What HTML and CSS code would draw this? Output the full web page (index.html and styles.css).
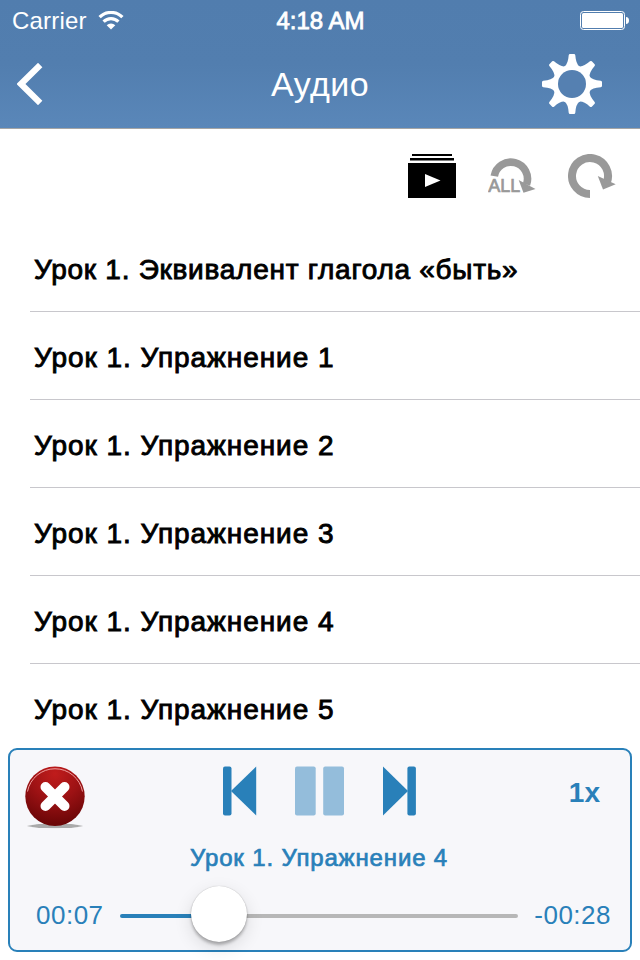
FILE: index.html
```html
<!DOCTYPE html>
<html lang="ru">
<head>
    <meta charset="UTF-8">
    <meta name="viewport" content="width=device-width, initial-scale=1.0">
    <title>Аудио</title>
    <link rel="stylesheet" href="styles.css">
</head>
<body>
    <div class="app">
        <header class="header">
            <div class="status-bar">
                <div class="carrier">
                    <span class="carrier-name">Carrier</span>
                    <svg class="wifi" width="26" height="20" viewBox="0 0 26 20">
                        <g fill="none" stroke="#fff" stroke-width="3.200">
                            <path d="M1.6 6.2a16 16 0 0 1 22.8 0"/>
                            <path d="M5.6 10.6a10.5 10.5 0 0 1 14.8 0"/>
                        </g>
                        <path fill="#fff" d="M13 18.500l-4.300-4.300a6.200 6.200 0 0 1 8.600 0z"/>
                    </svg>
                </div>
                <span class="clock">4:18 AM</span>
                <svg class="battery" width="49" height="19" viewBox="0 0 49 19">
                    <rect x=".5" y=".5" width="44" height="18" rx="3" fill="none" stroke="#fff"/>
                    <rect x="2" y="2" width="41" height="15" rx="1.5" fill="#fff"/>
                    <path d="M46 6c2 0 3 1.500 3 3.500s-1 3.500-3 3.500z" fill="#fff"/>
                </svg>
            </div>
            <nav class="nav-bar">
                <svg class="back" width="26" height="42" viewBox="0 0 26 42">
                    <path d="M23.200 2L4 21l19.200 19" fill="none" stroke="#fff" stroke-width="6.200"/>
                </svg>
                <h1 class="nav-title">Аудио</h1>
                <svg class="gear" width="60" height="60" viewBox="-30 -30 60 60">
                    <defs>
                        <path id="tooth" d="M-7.500-17.500Q-3.900-20-3.300-28.700Q-3.100-30-2-30H2Q3.100-30 3.300-28.700Q3.900-20 7.500-17.500L5-12H-5z"/>
                    </defs>
                    <g fill="#fff">
                        <use href="#tooth"/>
                        <use href="#tooth" transform="rotate(45)"/>
                        <use href="#tooth" transform="rotate(90)"/>
                        <use href="#tooth" transform="rotate(135)"/>
                        <use href="#tooth" transform="rotate(180)"/>
                        <use href="#tooth" transform="rotate(225)"/>
                        <use href="#tooth" transform="rotate(270)"/>
                        <use href="#tooth" transform="rotate(315)"/>
                    </g>
                    <circle r="16.500" fill="none" stroke="#fff" stroke-width="5"/>
                    <circle r="14" fill="#5580b1"/>
                </svg>
            </nav>
        </header>

        <div class="toolbar">
            <svg width="48" height="44" viewBox="0 0 48 44">
                <path d="M4 0h40v2H4zM2 4h44v2.500H2zM0 9h48v35H0z"/>
                <path d="M17 20l15.500 6.500L17 33z" fill="#fff"/>
            </svg>
            <svg width="48" height="44" viewBox="0 0 48 44">
                <path d="M6.300 22.200A16.700 16.700 0 1 1 38.500 30.500" fill="none" stroke="#999" stroke-width="7.600"/>
                <path d="M30.700 26l16.800 9L35.500 38.700z" fill="#999"/>
                <text class="all-label" x=".3" y="38.300">ALL</text>
            </svg>
            <svg width="48" height="44" viewBox="0 0 48 44">
                <path d="M22 40A18 18 0 1 1 38.800 28.500" fill="none" stroke="#999" stroke-width="8"/>
                <path d="M29.800 22l17.900 8.300L35 35.500z" fill="#999"/>
            </svg>
        </div>

        <ul class="track-list">
            <li class="track track-first">Урок 1. Эквивалент глагола «быть»</li>
            <li class="track">Урок 1. Упражнение 1</li>
            <li class="track">Урок 1. Упражнение 2</li>
            <li class="track">Урок 1. Упражнение 3</li>
            <li class="track">Урок 1. Упражнение 4</li>
            <li class="track">Урок 1. Упражнение 5</li>
        </ul>

        <section class="player">
            <div class="player-top">
                <svg class="close" width="62" height="64" viewBox="0 0 62 64">
                    <defs>
                        <radialGradient id="red" cx=".5" cy=".12" r=".85">
                            <stop offset="0" stop-color="#c01c1c"/>
                            <stop offset=".5" stop-color="#9d1214"/>
                            <stop offset="1" stop-color="#6b0607"/>
                        </radialGradient>
                        <radialGradient id="shade">
                            <stop offset=".8" stop-color="#aaa"/>
                            <stop offset="1" stop-color="#aaa" stop-opacity="0"/>
                        </radialGradient>
                    </defs>
                    <ellipse cx="31" cy="60" rx="29" ry="2.600" fill="url(#shade)"/>
                    <circle cx="31" cy="30.300" r="29.700" fill="url(#red)"/>
                    <path d="M3.500 25.500a28 28 0 0 1 55 0" fill="none" stroke="#f0a0a0" stroke-width="1"/>
                    <path d="M21.500 21l19 19M40.500 21l-19 19" stroke="#fff" stroke-width="10" stroke-linecap="round"/>
                </svg>
                <div class="controls">
                    <svg width="34" height="50" viewBox="0 0 34 50">
                        <rect x="0" y=".5" width="8.500" height="49" rx="2" fill="#2980b9"/>
                        <path d="M33.200 .5v49L8 25z" fill="#2980b9"/>
                    </svg>
                    <svg width="50" height="50" viewBox="0 0 50 50">
                        <rect x="0" y=".5" width="20.700" height="49" rx="2" fill="#94bddb"/>
                        <rect x="28.200" y=".5" width="20.800" height="49" rx="2" fill="#94bddb"/>
                    </svg>
                    <svg width="34" height="50" viewBox="0 0 34 50">
                        <path d="M0 .5v49L25 25z" fill="#2980b9"/>
                        <rect x="24.400" y=".5" width="8.500" height="49" rx="2" fill="#2980b9"/>
                    </svg>
                </div>
                <span class="speed">1x</span>
            </div>
            <div class="now-playing">Урок 1. Упражнение 4</div>
            <div class="progress">
                <span class="time">00:07</span>
                <div class="slider">
                    <div class="slider-fill" style="width: 25%"></div>
                    <div class="slider-thumb"></div>
                    <div class="slider-rest"></div>
                </div>
                <span class="time time-left">-00:28</span>
            </div>
        </section>
    </div>
</body>
</html>
```
FILE: styles.css
```css
* {
    box-sizing: border-box;
}

body {
    margin: 0;
    font-family: "Liberation Sans", Arial, sans-serif;
    background: #fff;
    color: #000;
}

svg {
    display: block;
    flex-shrink: 0;
}

.app {
    width: 640px;
    height: 960px;
    display: flex;
    flex-direction: column;
    overflow: hidden;
}

/* Header */
.header {
    height: 129px;
    flex-shrink: 0;
    color: #fff;
    background: linear-gradient(#517dae, #527eaf 50%, #5a87b9);
    border-bottom: 1px solid #a5a5a5;
}

.status-bar {
    height: 40px;
    display: grid;
    grid-template-columns: 1fr auto 1fr;
    align-items: center;
    padding: 1px 11px 0 12px;
    font-size: 24px;
}

.carrier {
    display: flex;
    align-items: center;
    gap: 11px;
}

.carrier-name {
    letter-spacing: 0.2px;
}

.clock {
    -webkit-text-stroke: 0.8px #fff;
}

.battery {
    justify-self: end;
}

.nav-bar {
    height: 88px;
    display: grid;
    grid-template-columns: 1fr auto 1fr;
    align-items: center;
    padding: 0 17px;
}

.nav-title {
    margin: 0;
    font-size: 34px;
    font-weight: normal;
    letter-spacing: 0.4px;
}

.gear {
    justify-self: end;
    margin-right: 21px;
}

/* Playback mode buttons */
.toolbar {
    height: 95px;
    flex-shrink: 0;
    display: flex;
    justify-content: flex-end;
    align-items: center;
    gap: 32px;
    padding: 0 24px 2px 0;
}

.all-label {
    font-size: 18px;
    fill: #999;
    stroke: #999;
    stroke-width: 0.7px;
}

/* Lesson list */
.track-list {
    list-style: none;
    margin: 0;
    padding: 0 0 0 30px;
    height: 524px;
    flex-shrink: 0;
    overflow: hidden;
}

.track {
    height: 88px;
    padding: 3px 0 0 4px;
    border-bottom: 1px solid #c8c7cc;
    font-size: 28px;
    letter-spacing: 0.95px;
    line-height: 86px;
    white-space: nowrap;
    -webkit-text-stroke: 0.9px #000;
}

.track-first {
    letter-spacing: 0.73px;
}

/* Player */
.player {
    width: 624px;
    height: 204px;
    margin: 0 8px;
    flex-shrink: 0;
    border: 2px solid #2980b9;
    border-radius: 9px;
    background: #f7f7fa;
    color: #2980b9;
}

.player-top {
    height: 82px;
    display: grid;
    grid-template-columns: 1fr auto 1fr;
    padding: 16px 14px 0;
}

.controls {
    display: flex;
    gap: 38px;
}

.speed {
    justify-self: end;
    margin-right: 16px;
    font-size: 28px;
    font-weight: bold;
    line-height: 54px;
}

.now-playing {
    height: 52px;
    padding-right: 2px;
    font-size: 24px;
    letter-spacing: 0.84px;
    line-height: 52px;
    text-align: center;
    -webkit-text-stroke: 0.7px #2980b9;
}

.progress {
    height: 64px;
    display: flex;
    align-items: center;
    padding: 0 18px 0 26px;
}

.time {
    width: 84px;
    margin-top: -2px;
    font-size: 26px;
    letter-spacing: 0.5px;
}

.time-left {
    width: 94px;
    padding-right: 1px;
    text-align: right;
}

.slider {
    flex: 1;
    display: flex;
    align-items: center;
}

.slider-fill {
    height: 4px;
    margin-right: -29px;
    border-radius: 2px;
    background: #2980b9;
}

.slider-thumb {
    width: 56px;
    height: 56px;
    margin-top: -4px;
    flex-shrink: 0;
    border-radius: 50%;
    background: #fff;
    box-shadow: 0 0 1px rgba(0, 0, 0, 0.3), 0 3px 3px rgba(0, 0, 0, 0.25), 0 6px 18px rgba(0, 0, 0, 0.12);
    z-index: 1;
}

.slider-rest {
    flex: 1;
    height: 4px;
    margin-left: -4px;
    border-radius: 2px;
    background: #b7b7b7;
}
```
